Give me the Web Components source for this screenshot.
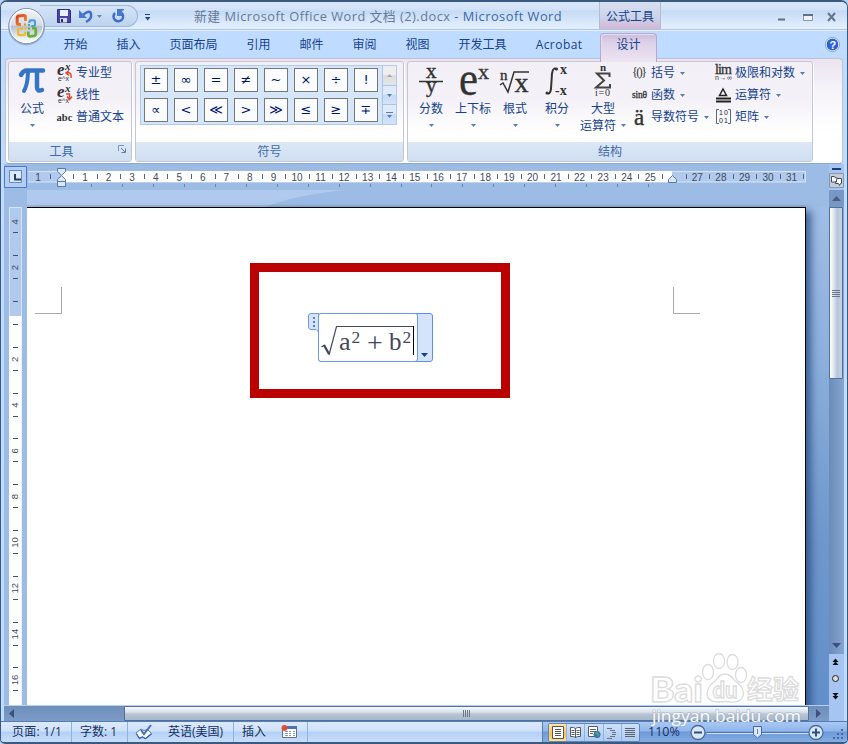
<!DOCTYPE html>
<html lang="zh-CN">
  <head>
    <meta charset="UTF-8" />
    <title>新建 Microsoft Office Word 文档 (2).docx - Microsoft Word</title>
    <style>
      html,
      body {
        margin: 0;
        height: 744px;
        overflow: hidden;
        background: #b9d2f2;
      }
      body {
        font: 12px/16px "Open Sans", "Noto Sans CJK SC", sans-serif;
        color: #15428b;
      }
    </style>
  </head>
  <body>
    <word-window></word-window>

    <template id="word-window">
      <style>
        :host {
          display: flex;
          flex-direction: column;
          position: relative;
          box-sizing: border-box;
          width: 848px;
          height: 744px;
          overflow: hidden;
          border: 1px solid #3b5a82;
          border-top-width: 2px;
          border-bottom-width: 2px;
          border-radius: 7px 7px 5px 5px;
          background: #bfdbff;
        }
        .ribbon {
          display: flex;
          gap: 3px;
          box-sizing: border-box;
          height: 106px;
          margin: 0 4px 0 4px;
          padding: 2px 3px 3px 2px;
          border: 1px solid #c4bfd0;
          border-bottom-color: #8caad0;
          border-radius: 4px;
          background: linear-gradient(#ebe3f0, #f4f1f8 25%, #fff 70%);
          flex: none;
        }
        .col {
          display: flex;
          flex-direction: column;
          gap: 6px;
        }
        office-button {
          position: absolute;
          left: 6px;
          top: 4px;
        }
        baidu-mark {
          position: absolute;
          left: 645px;
          top: 646px;
        }
      </style>
      <title-bar></title-bar>
      <tab-strip></tab-strip>
      <div class="ribbon">
        <ribbon-group label="工具" launcher style="width: 124px">
          <big-button icon="pi" label="公式" style="width: 46px"></big-button>
          <div class="col" style="margin: 3px 0 0 1px">
            <small-button icon="pro" label="专业型"></small-button>
            <small-button icon="linear" label="线性"></small-button>
            <small-button icon="abc" label="普通文本"></small-button>
          </div>
        </ribbon-group>
        <ribbon-group label="符号" style="width: 269px">
          <symbol-gallery></symbol-gallery>
        </ribbon-group>
        <ribbon-group label="结构" style="width: 406px">
          <big-button icon="fraction" label="分数" style="margin-left: 2px"></big-button>
          <big-button icon="script" label="上下标"></big-button>
          <big-button icon="radical" label="根式"></big-button>
          <big-button icon="integral" label="积分"></big-button>
          <big-button icon="sum" label="大型" second="运算符" style="width: 50px"></big-button>
          <div class="col" style="margin: 3px 0 0 3px; width: 84px">
            <small-button icon="bracket" label="括号" arrow></small-button>
            <small-button icon="sin" label="函数" arrow></small-button>
            <small-button icon="accent" label="导数符号" arrow></small-button>
          </div>
          <div class="col" style="margin-top: 3px">
            <small-button icon="lim" label="极限和对数" arrow></small-button>
            <small-button icon="delta" label="运算符" arrow></small-button>
            <small-button icon="matrix" label="矩阵" arrow></small-button>
          </div>
        </ribbon-group>
      </div>
      <work-area></work-area>
      <status-bar></status-bar>
      <office-button></office-button>
      <baidu-mark></baidu-mark>
    </template>

    <template id="office-button">
      <style>
        :host {
          display: block;
        }
        svg {
          display: block;
        }
      </style>
      <svg width="40" height="42" viewBox="0 0 40 42">
        <defs>
          <linearGradient id="orb" x2="0" y2="1">
            <stop offset="0" stop-color="#f4f6fa" />
            <stop offset=".48" stop-color="#d5dbe6" />
            <stop offset=".5" stop-color="#b5c0d2" />
            <stop offset=".8" stop-color="#e4e9f1" />
            <stop offset="1" stop-color="#fff" />
          </linearGradient>
          <linearGradient id="red" x2="1" y2="1">
            <stop offset="0" stop-color="#d9401a" />
            <stop offset="1" stop-color="#f59a2c" />
          </linearGradient>
        </defs>
        <circle cx="19.500" cy="21" r="18.500" fill="#7f92ad" opacity=".55" />
        <circle cx="19.500" cy="20" r="17.600" fill="url(#orb)" stroke="#8192ad" />
        <circle cx="19.500" cy="20" r="16.500" fill="none" stroke="#fff" opacity=".8" />
        <g fill="none">
          <path d="M14 18.500h-2q-1.800 0-1.800-1.800v-5q0-1.500 1.600-1.700l5-.6q1.700 0 1.700 1.600v4" stroke="url(#red)" stroke-width="3" />
          <path d="M22.500 17v-1.500q0-1.200 1.200-1.200h3q1.300 0 1.300 1.300v3.200q0 1.200-1.200 1.200h-2.500" stroke="#4ba0dc" stroke-width="2.200" />
          <path d="M16 22.600h-3.300q-1.500 0-1.500 1.400v3.800q0 1.400 1.500 1.400h3.800q1.500 0 1.500-1.400v-2" stroke="#f2b92e" stroke-width="2.200" />
          <path d="M25 22.200h2.200q1.600 0 1.600 1.600v4q0 1.800-1.600 2l-4.300.5q-1.600 0-1.600-1.700v-3" stroke="#6aaf32" stroke-width="2.800" />
        </g>
        <path d="M17 17.500h2v2h-2z" fill="#f08a24" />
        <path d="M21 18h2v2h-2z" fill="#4ba0dc" />
        <path d="M17.500 21.500h2v2h-2z" fill="#f2b92e" />
        <path d="M21 21.500h2v2h-2z" fill="#6aaf32" />
      </svg>
    </template>

    <template id="title-bar">
      <style>
        :host {
          display: flex;
          flex: none;
          height: 28px;
          position: relative;
          background: linear-gradient(#dae7f8, #d2e2f8 28%, #c5daf4 34%, #d9e9fc 75%, #e5effc);
          border-bottom: 1px solid #a9c7ee;
          box-sizing: border-box;
        }
        .quick {
          display: flex;
          align-items: center;
          box-sizing: border-box;
          width: 98px;
          height: 22px;
          margin: 3px 0 0 39px;
          padding-left: 16px;
          border: 1px solid #9db9dd;
          border-left: 0;
          border-radius: 0 11px 11px 0;
          background: linear-gradient(#d5e4f6, #bdd3ef);
        }
        .more {
          margin: 10px 0 0 5px;
        }
        .title {
          margin: 5px 0 0 42px;
          width: 405px;
          font-size: 12.800px;
          line-height: 18px;
          letter-spacing: 0.500px;
          white-space: pre;
          color: #65799a;
        }
        .title b {
          font-weight: normal;
          color: #3a67a8;
        }
        .context {
          box-sizing: border-box;
          width: 62px;
          height: 27px;
          padding-top: 7px;
          text-align: center;
          border: solid #b4bad2;
          border-width: 0 1px;
          background: linear-gradient(#d8dff0, #cad4ea 55%, #d6b6d3);
        }
        .buttons {
          display: block;
          margin: 7px 0 0 115px;
        }
      </style>
      <div class="quick">
        <svg width="80" height="18" viewBox="0 0 80 18">
          <path d="M1.500 2.500h12l1 1v12h-13z" fill="#4545ac" stroke="#30307f" />
          <path d="M4 3h8v6H4z" fill="#e8f1fb" />
          <path d="M4 11h7v4.500H4z" fill="#d8d8e8" />
          <path d="M5 12h2v3H5z" fill="#2b2b75" />
          <path d="M27 8q7-6 8-1q1 5-5 8" fill="none" stroke="#3f6fcb" stroke-width="2.500" />
          <path d="M23 3v8h8z" fill="#4878d0" />
          <path d="M41 8h5l-2.500 3z" fill="#6387bb" />
          <path d="M59 6a4.800 4.800 0 1 0 6-.5" fill="none" stroke="#3f6fcb" stroke-width="2.500" />
          <path d="M61 2h7v1l-2 1v5h-5z" fill="#4878d0" />
        </svg>
      </div>
      <svg class="more" width="9" height="10" viewBox="0 0 9 10">
        <path d="M2 2.500h5" stroke="#234778" />
        <path d="M2 5h5.500L4.700 8.500z" fill="#234778" />
      </svg>
      <div class="title">新建 Microsoft Office Word 文档 (2).docx<b> - Microsoft Word</b></div>
      <div class="context">公式工具</div>
      <svg class="buttons" width="68" height="16" viewBox="0 0 68 16">
        <path d="M2 10.500h7" stroke="#617087" stroke-width="2" />
        <path d="M27.500 5.500h9v6h-9z" fill="#eef3fa" stroke="#8d98aa" />
        <path d="M27 6h10" stroke="#617087" stroke-width="2" />
        <path d="M52 4l7 8M59 4l-7 8" stroke="#66758b" stroke-width="2" />
      </svg>
    </template>

    <template id="tab-strip">
      <style>
        :host {
          display: flex;
          flex: none;
          height: 28px;
          padding-left: 48px;
          box-sizing: border-box;
          border-top: 1px solid #e4efff;
          background: #bfdbff;
        }
        span {
          padding: 6px 14.500px 0;
          white-space: nowrap;
        }
        .active {
          box-sizing: border-box;
          width: 57px;
          height: 29px;
          margin: 2px 0 -2px;
          padding: 3px 0 0;
          text-align: center;
          border: 1px solid #b7a9cc;
          border-bottom: 0;
          border-radius: 4px 4px 0 0;
          background: linear-gradient(#cbbcdc, #dcd1e8 30%, #eee5f2);
          box-shadow: inset 1px 1px #eadff0;
          position: relative;
        }
        svg {
          margin: 6px 0 0 auto;
          padding-right: 7px;
        }
      </style>
      <span>开始</span><span>插入</span><span>页面布局</span><span>引用</span><span>邮件</span
      ><span>审阅</span><span>视图</span><span>开发工具</span
      ><span style="width: 50px; letter-spacing: 0.45px">Acrobat</span><span class="active">设计</span>
      <svg width="15" height="15" viewBox="0 0 15 15">
        <circle cx="7.500" cy="7.500" r="6.500" fill="#2b62cf" stroke="#fff" stroke-width="1.200" />
        <circle cx="7.500" cy="7.500" r="7" fill="none" stroke="#738db5" stroke-width=".8" />
        <text x="4.600" y="11.500" font-family="Liberation Sans" font-weight="bold" font-size="11" fill="#fff">?</text>
      </svg>
    </template>

    <template id="ribbon-group">
      <style>
        :host {
          display: flex;
          flex-direction: column;
          flex: none;
          box-sizing: border-box;
          height: 101px;
          border: 1px solid #c3c7d1;
          border-radius: 3px;
          background: linear-gradient(#f2eff7, #f4f2f8 40%, #fff 72%);
          box-shadow: 1px 1px #fff;
        }
        .body {
          display: flex;
          height: 80px;
        }
        .label {
          position: relative;
          height: 19px;
          line-height: 19px;
          padding-right: 17px;
          text-align: center;
          color: #3e6aaa;
          background: linear-gradient(#dce7f5, #cfdff1);
        }
        .label.plain {
          padding-right: 0;
        }
        svg {
          position: absolute;
          right: 4px;
          top: 3px;
        }
      </style>
      <div class="body"><slot></slot></div>
      <div class="label">
        <span></span>
        <svg width="9" height="9" viewBox="0 0 9 9">
          <path d="M.5 6V.5H6" fill="none" stroke="#7c95b9" />
          <path d="M3 3l4 4M7.500 3.500v4h-4" fill="none" stroke="#66799b" />
        </svg>
      </div>
    </template>

    <template id="symbol-gallery">
      <style>
        :host {
          display: flex;
          box-sizing: border-box;
          width: 257px;
          height: 60px;
          margin: 3px 0 0 4px;
          border: 1px solid #b1cbe9;
          background: #d5e6f8;
        }
        .cells {
          display: grid;
          grid-template-columns: repeat(8, 24px);
          grid-auto-rows: 24px;
          gap: 6px;
          padding: 2px 4px 2px 3px;
        }
        .cells span {
          box-sizing: border-box;
          border: 1px solid #777;
          background: #fafbfc;
          color: #00106f;
          font: 13px/22px "DejaVu Sans", sans-serif;
          text-align: center;
        }
        .scroll {
          display: flex;
          flex-direction: column;
          width: 15px;
        }
        .scroll i {
          flex: 1;
          display: grid;
          place-items: center;
          border: solid #a9c4e8;
          border-width: 0 0 1px 1px;
          background: linear-gradient(#dfebfa 45%, #c5daf4 50%, #d3e4f8);
        }
        .scroll i:first-child {
          background: linear-gradient(#eee 45%, #ddd 50%, #e5e5e5);
        }
        .scroll i:last-child {
          border-bottom: 0;
        }
      </style>
      <div class="cells"></div>
      <div class="scroll">
        <i><svg width="7" height="5"><path d="M1 4h5L3.500 1z" fill="#aaa" /></svg></i>
        <i><svg width="7" height="5"><path d="M1 1h5L3.500 4z" fill="#567db1" /></svg></i>
        <i><svg width="7" height="8"><path d="M0 1.500h7" stroke="#567db1" /><path d="M1 4h5L3.500 7z" fill="#567db1" /></svg></i>
      </div>
    </template>

    <template id="big-button">
      <style>
        :host {
          display: flex;
          flex-direction: column;
          align-items: center;
          width: 42px;
          white-space: nowrap;
        }
        .icon {
          height: 34px;
          margin-top: 3px;
        }
        .icon svg {
          overflow: visible;
        }
        .text {
          display: block;
          margin-top: 2px;
        }
        .arrow {
          height: 17px;
          display: flex;
          align-items: center;
          gap: 5px;
        }
      </style>
      <div class="icon"></div>
      <span class="text"></span>
      <div class="arrow">
        <span></span><svg width="5" height="3"><path d="M0 0h5L2.500 3z" fill="#567db1" /></svg>
      </div>
    </template>

    <template id="small-button">
      <style>
        :host {
          display: flex;
          align-items: center;
          height: 16px;
          white-space: nowrap;
        }
        .icon {
          width: 20px;
          height: 18px;
        }
        .icon svg {
          overflow: visible;
        }
        .arrow {
          margin-left: 5px;
        }
      </style>
      <div class="icon"></div>
      <span></span>
      <svg class="arrow" width="5" height="3"><path d="M0 0h5L2.500 3z" fill="#567db1" /></svg>
    </template>

    <template id="work-area">
      <style>
        :host {
          display: grid;
          grid-template-columns: 825px 15px;
          grid-template-rows: 541px 16px;
          height: 557px;
          padding-left: 3px;
          flex: none;
        }
        .desk {
          display: grid;
          grid-template-columns: 23px 802px;
          grid-template-rows: 43px 498px;
          overflow: hidden;
          background: linear-gradient(#a0bee6 8%, #8db0dd 35%, #6f97cb 70%, #6390cb);
        }
        .top {
          grid-column: 1 / 3;
          display: flex;
          align-items: flex-start;
          background: #9dbce5;
        }
        .left {
          background: #9dbce5;
          position: relative;
          z-index: 1;
        }
        .right {
          display: flex;
          flex-direction: column;
          background: #a6c5f3;
        }
        .split {
          height: 43px;
        }
        .track {
          height: 447px;
          display: flex;
          flex-direction: column;
          justify-content: space-between;
          background: linear-gradient(90deg, #6b8bb8, #87a5cf);
        }
        .thumb {
          box-sizing: border-box;
          height: 172px;
          margin: 0 1px 0 0;
          display: grid;
          place-items: center;
          border: 1px solid #536f9f;
          border-radius: 1px;
          background: linear-gradient(90deg, #fff, #dfe7ef 30%, #b4c6da 60%, #c6d3e2);
        }
        .bottom {
          grid-column: 1;
          display: flex;
          box-sizing: border-box;
          height: 16px;
          border-top: 1px solid #b6d0f4;
          background: linear-gradient(#6f8fbb, #7c9bc6);
        }
        .bottom .thumb {
          width: 685px;
          height: 15px;
          margin-left: 103px;
          background: linear-gradient(#f6f9fc, #d7e0e9 40%, #b7c4d3 55%, #a8b8c9);
        }
        svg {
          display: block;
        }
      </style>
      <div class="desk">
        <div class="top"><h-ruler></h-ruler></div>
        <div class="left"><v-ruler></v-ruler></div>
        <doc-page></doc-page>
      </div>
      <div class="right">
        <svg class="split" width="15" height="43" viewBox="0 0 15 43">
          <path d="M3 5h9" stroke="#1f3c70" stroke-width="2" />
          <path d="M0 26h15v17H0z" fill="#7797c4" />
          <path d="M.5 9.500h14v14H.5z" fill="#c6ccd6" stroke="#8798b0" />
          <path d="M2.500 12.500h3l1 1.500h2l-1 2v2h-5zM8.500 14.500h4v5h-1l-1 2-1-2h-3v-2" fill="#fff" stroke="#454a66" />
          <path d="M3 37h9L7.500 32z" fill="#4c5b83" />
        </svg>
        <div class="track">
          <div class="thumb">
            <svg width="8" height="9"><path d="M0 1.500h8M0 3.500h8M0 5.500h8M0 7.500h8" stroke="#697789" /></svg>
          </div>
          <svg width="15" height="16"><path d="M3 5h9L7.500 10z" fill="#3f4f80" /></svg>
        </div>
        <svg width="15" height="51" viewBox="0 0 15 51">
          <path d="M3.500 8h6l-3-3.500zM3.500 11h6l-3-3.500z" fill="#111" />
          <circle cx="6.500" cy="24.500" r="3" fill="#ddd" stroke="#222" />
          <path d="M3.500 39h6l-3 3.500zM3.500 42h6l-3 3.500z" fill="#111" />
        </svg>
      </div>
      <div class="bottom">
        <svg width="17" height="14"><path d="M10 3v9L5 7.500z" fill="#3f4f80" /></svg>
        <div class="thumb">
          <svg width="8" height="7"><path d="M.5 0v7M2.500 0v7M4.500 0v7M6.500 0v7" stroke="#697789" /></svg>
        </div>
        <svg width="18" height="14"><path d="M6 3v9l5-4.500z" fill="#3f4f80" /></svg>
      </div>
      <div style="background: #a6c5f3"></div>
    </template>

    <template id="doc-page">
      <style>
        :host {
          display: block;
          position: relative;
          box-sizing: border-box;
          width: 779px;
          height: 500px;
          border: solid #000;
          border-width: 1px 1px 0 0;
          background: #fff;
          box-shadow: 5px 4px 8px 0 #25497dcc;
        }
        .mark {
          position: absolute;
          top: 79px;
          width: 26px;
          height: 26px;
          border: solid #aaa;
          border-width: 0 0 1px 1px;
        }
        .mark.l {
          left: 8px;
          border-width: 0 1px 1px 0;
        }
        .mark.r {
          left: 646px;
        }
        .frame {
          position: absolute;
          left: 223px;
          top: 55px;
          width: 242px;
          height: 117px;
          border: 9px solid #ba0000;
        }
        math-box {
          position: absolute;
          left: 281px;
          top: 105px;
        }
      </style>
      <div class="mark l"></div>
      <div class="mark r"></div>
      <div class="frame"></div>
      <math-box></math-box>
    </template>

    <template id="math-box">
      <style>
        :host {
          display: block;
        }
        svg {
          display: block;
        }
        text {
          font-family: "Liberation Serif", serif;
          fill: #44485c;
        }
      </style>
      <svg width="126" height="50" viewBox="0 0 126 50">
        <path d="M11 .5H3Q.5.500.5 3v11q0 2.500 2.500 2.500h5l3 3" fill="#d6e3fd" stroke="#6a9be0" />
        <path d="M5 4h2v2H5zM5 8h2v2H5zM5 12h2v2H5z" fill="#4a86dc" />
        <rect x="10.500" y=".5" width="114" height="48" rx="2.500" fill="#d6e3fd" stroke="#5b93df" />
        <path d="M13 .5h94q2.500 0 2.500 2.500v43q0 2.500-2.500 2.500H13q-2.500 0-2.500-2.500V3Q10.500.5 13 .5z" fill="#fff" stroke="#6a9be0" />
        <path d="M13.500 34l3-2" fill="none" stroke="#44485c" stroke-width="1.200" />
        <path d="M16 32l5 9" fill="none" stroke="#44485c" stroke-width="2.300" />
        <path d="M21 42L28.500 13.500H105" fill="none" stroke="#44485c" stroke-width="1.200" />
        <text x="31" y="37" font-size="26">a</text>
        <text x="43.500" y="30" font-size="17.500">2</text>
        <text x="59" y="39" font-size="28">+</text>
        <text x="81" y="37" font-size="25">b</text>
        <text x="94.500" y="30" font-size="17.500">2</text>
        <path d="M105.500 13v29" stroke="#000" />
        <path d="M113 40h7l-3.500 4z" fill="#15428b" />
      </svg>
    </template>

    <template id="status-bar">
      <style>
        :host {
          display: flex;
          flex: none;
          align-items: stretch;
          height: 20px;
          border-top: 1px solid #567db1;
          color: #15315f;
          background: linear-gradient(#a9c9f5, #8fb5ea 45%, #6f9ad8 50%, #86ade2);
        }
        .left {
          display: flex;
          box-sizing: border-box;
          width: 542px;
          padding-left: 2px;
          border-right: 1px solid #567db1;
          background: linear-gradient(#dce9fb, #cfe1fa 45%, #b3d0f5 50%, #c9defa);
        }
        .left > * {
          box-sizing: border-box;
          display: flex;
          align-items: center;
          padding-left: 8px;
          white-space: nowrap;
        }
        .sep {
          border-right: 1px solid #8db2e3;
        }
        .views {
          display: flex;
          box-sizing: border-box;
          width: 92px;
          height: 19px;
          margin: 1px 0 0 5px;
          border: 1px solid #6387b9;
          border-radius: 2px;
          background: linear-gradient(#cfe1fa, #adcaf0);
        }
        .views i {
          flex: 1;
          display: grid;
          place-items: center;
          border-right: 1px solid #92b3df;
        }
        .views i:first-child {
          background: linear-gradient(#ffe4a7, #ffc24f 60%, #ffe18c);
        }
        .views i:last-child {
          border: 0;
        }
        .zoom {
          width: 40px;
          padding-left: 8px;
          line-height: 20px;
          font-size: 12.500px;
        }
      </style>
      <div class="left">
        <span class="sep" style="width: 69px; padding-left: 9px; letter-spacing: 0.25px">页面: 1/1</span>
        <span class="sep" style="width: 56px">字数: 1</span>
        <span style="width: 32px; padding-left: 7px">
          <svg width="18" height="16" viewBox="0 0 18 16">
            <path d="M1 9l5-4 3 1.500 3.500-1 4 4-6 5-3-1.500-3.500 1z" fill="#f6f9ff" stroke="#637a9e" />
            <path d="M1.500 10l3 4.500 3-1.500 3 1.800 6-5" fill="none" stroke="#3a62c0" stroke-width="1.300" />
            <path d="M6 6l3 4 7-9" fill="none" stroke="#476eb7" stroke-width="2" />
          </svg>
        </span>
        <span class="sep" style="width: 74px">英语(美国)</span>
        <span style="width: 40px; padding-left: 8px">插入</span>
        <span class="sep" style="width: 34px; padding-left: 7px">
          <svg width="16" height="14" viewBox="0 0 16 14">
            <path d="M1.500 1.500h14v11h-14z" fill="#fff" stroke="#5c7196" />
            <path d="M5 1h11v3H5z" fill="#4c72ae" />
            <path d="M4 6.500h3M8 6.500h2M12 6.500h2M4 8.500h3M8 8.500h2M12 8.500h2M4 10.500h3M8 10.500h2M12 10.500h2" stroke="#8799b5" />
            <circle cx="3.500" cy="3" r="3" fill="#df5037" />
          </svg>
        </span>
      </div>
      <div class="views">
        <i><svg width="12" height="13"><path d="M.5.5h11v12H.5z" fill="#fff" stroke="#565451" /><path d="M3 3.500h6M3 5.500h6M3 7.500h6M3 9.500h6" stroke="#565451" /></svg></i>
        <i><svg width="13" height="13"><path d="M1.500 1.500h3l2 1 2-1h3v9h-3l-2 1-2-1h-3zM6.500 2v10" fill="#fff" stroke="#565b66" /><path d="M2.500 4.500h3M2.500 6.500h3M2.500 8.500h3M7.500 4.500h3M7.500 6.500h3M7.500 8.500h3" stroke="#565b66" /></svg></i>
        <i><svg width="13" height="13"><path d="M.5.5h9v10h-9z" fill="#fff" stroke="#565b66" /><path d="M2 3.500h6M2 5.500h6M2 7.500h3" stroke="#565b66" /><circle cx="9" cy="8.500" r="3.500" fill="#3678a9" /><path d="M7 7l3 0 0 3" stroke="#6fb766" fill="none" /></svg></i>
        <i><svg width="12" height="12"><path d="M1 1.500h5M4 3.500h5M6 5.500h4M6 7.500h4M4 9.500h5M1 11.500h5" stroke="#6a7180" /></svg></i>
        <i><svg width="12" height="12"><path d="M1 1.500h10M1 3.500h10M1 5.500h10M1 7.500h10M1 9.500h10" stroke="#5b616d" /></svg></i>
      </div>
      <span class="zoom">110%</span>
      <svg width="158" height="20" viewBox="0 0 158 20">
        <path d="M19 10.500h102" stroke="#4c70a9" />
        <path d="M19 11.500h102" stroke="#d4e5fb" />
        <g fill="#d9e7fa" stroke="#496a9c" stroke-width="1.300">
          <circle cx="10" cy="10.500" r="7" />
          <circle cx="128" cy="10.500" r="7" />
          <path d="M65.500 4.500h8v8l-4 3.500-4-3.500z" stroke-width="1" />
        </g>
        <path d="M6 10.500h8M124 10.500h8M128 6.500v8" stroke="#32507f" stroke-width="2" />
        <path d="M69.500 7v5" stroke="#6786b5" />
        <path d="M153 7h2v2h-2zM149 11h2v2h-2zM153 11h2v2h-2zM145 15h2v2h-2zM149 15h2v2h-2zM153 15h2v2h-2z" fill="#456ba7" />
      </svg>
    </template>

    <template id="baidu-mark">
      <style>
        :host {
          display: block;
        }
        svg {
          display: block;
        }
      </style>
      <svg width="165" height="82" viewBox="0 0 165 82">
        <g fill="#fff" stroke="#dcdcdc" stroke-width="1.300">
          <ellipse cx="62" cy="24" rx="5.500" ry="7.500" />
          <ellipse cx="73" cy="13" rx="5.500" ry="7.500" />
          <ellipse cx="86.500" cy="14" rx="5.500" ry="7.500" />
          <ellipse cx="95" cy="27" rx="5.500" ry="7.500" />
          <path d="M79 26q5 0 9 6 9 6 9.500 13-.5 10-12.500 9-7-1-13 0-11 0-11-9 1-7 9-13 4-6 9-6z" />
          <g font-family="Lato, sans-serif">
            <text x="4" y="54" font-size="34" font-weight="900" textLength="53" lengthAdjust="spacingAndGlyphs">Bai</text>
            <text x="66.500" y="50" font-size="22" font-weight="bold" textLength="25" lengthAdjust="spacingAndGlyphs">du</text>
            <text x="101" y="51" font-size="26" font-weight="bold" font-family="Noto Sans CJK SC, sans-serif">经验</text>
          </g>
        </g>
        <text x="6" y="74" font-family="Open Sans, sans-serif" font-size="16.500" textLength="149" lengthAdjust="spacingAndGlyphs" fill="#fafcff" stroke="#9eabc0" stroke-opacity=".45" stroke-width="1.800" paint-order="stroke">jingyan.baidu.com</text>
      </svg>
    </template>

    <script>
      const SERIF = `font-family="Liberation Serif, serif" fill="#333"`;
      const ex = `<text x="1" y="11" ${SERIF} font-size="17" font-style="italic" font-weight="bold">e</text>
        <text x="9" y="6" ${SERIF} font-size="11" font-style="italic" font-weight="bold">x</text>
        <text x="2" y="17" font-family="Liberation Sans" font-size="7" textLength="11" fill="#333">e^x</text>`;

      const icons = {
        pi: `<svg width="30" height="34" viewBox="0 0 30 34"><g fill="none" stroke="#3675c5" stroke-linecap="round">
          <path d="M4 10q2-4.500 6-4.500h16" stroke-width="4.500"/><path d="M11 8q-.5 12-4 18" stroke-width="4"/>
          <path d="M20 8v14q0 5 5 3" stroke-width="4.500"/></g></svg>`,
        pro: `<svg width="17" height="18">${ex}<path d="M15 14q1-6-4-5M13 6.500L10 9l3 2.500" fill="none" stroke="#db4a2c" stroke-width="1.500"/></svg>`,
        linear: `<svg width="17" height="18">${ex}<path d="M10 8h3.500v5M11 10.500l2.500 3 2.500-3" fill="none" stroke="#db4a2c" stroke-width="1.500"/></svg>`,
        abc: `<svg width="18" height="18"><text x="0.500" y="13" ${SERIF} font-size="10.500" font-weight="bold" textLength="16">abc</text></svg>`,
        fraction: `<svg width="26" height="34"><g ${SERIF} font-size="21" stroke="#333" stroke-width=".4"><text x="8" y="13">x</text>
          <text x="8" y="27">y</text></g><path d="M1 16.500h24" stroke="#333" stroke-width="1.300"/></svg>`,
        script: `<svg width="32" height="34"><g ${SERIF} stroke="#444" stroke-width=".4">
          <text x="2" y="30" font-size="48" textLength="19" lengthAdjust="spacingAndGlyphs">e</text>
          <text x="21" y="14" font-size="22">x</text></g></svg>`,
        radical: `<svg width="32" height="34"><g ${SERIF} stroke="#333" stroke-width=".4"><text x="1" y="15" font-size="15">n</text>
          <text x="15.500" y="27" font-size="28">x</text></g><path d="M1 20l3-2 5 9 6-20h15" fill="none" stroke="#333" stroke-width="1.500"/></svg>`,
        integral: `<svg width="24" height="34"><path d="M12 4.500q-4-3-5 4L6 24q-1 6-4 4" fill="none" stroke="#333" stroke-width="2"/>
          <circle cx="11.500" cy="4" r="1.500" fill="#333"/><circle cx="2" cy="28" r="1.500" fill="#333"/>
          <g ${SERIF} font-size="14" font-weight="bold"><text x="15" y="9">x</text><text x="10" y="30">-x</text></g></svg>`,
        sum: `<svg width="28" height="34"><g ${SERIF}><text x="11" y="6" font-size="11" font-weight="bold">n</text>
          <text x="6" y="31" font-size="10" textLength="15">i=0</text></g>
          <path d="M20.500 12V8.500H8l7 7-8 7h14V19" fill="none" stroke="#444" stroke-width="2"/></svg>`,
        bracket: `<svg width="18" height="18"><text x="1" y="12" ${SERIF} font-size="12" textLength="15">{()}</text></svg>`,
        sin: `<svg width="18" height="18"><text x="1" y="12" ${SERIF} font-size="9.500" stroke="#333" stroke-width=".3" textLength="15">sinθ</text></svg>`,
        accent: `<svg width="18" height="20"><text x="3" y="17" ${SERIF} font-size="23" stroke="#333" stroke-width=".4">ä</text></svg>`,
        lim: `<svg width="18" height="18"><text x="0" y="10" ${SERIF} font-size="14" stroke="#333" stroke-width=".3" textLength="17">lim</text>
          <text x="0" y="16" font-family="Liberation Sans" font-size="7" textLength="17" fill="#333">n→∞</text></svg>`,
        delta: `<svg width="18" height="18"><path d="M4.500 9.500h7L8 3z" fill="none" stroke="#222" stroke-width="1.500"/>
          <path d="M1 12.500h15M1 15.500h15" stroke="#222" stroke-width="1.800"/></svg>`,
        matrix: `<svg width="18" height="18"><path d="M4 1.500H1.500v14H4M13 1.500h2.500v14H13" fill="none" stroke="#4d698f"/>
          <g font-family="Liberation Sans" font-size="7" fill="#222"><text x="4" y="7" textLength="9">10</text><text x="4" y="15" textLength="9">01</text></g></svg>`,
      };

      // clones the <template> whose id is the tag name
      class Base extends HTMLElement {
        constructor() {
          super();
          this.attachShadow({ mode: "open" });
          const tpl = document.getElementById(this.localName);
          if (tpl) this.shadowRoot.append(tpl.content.cloneNode(true));
        }
        $(sel) {
          return this.shadowRoot.querySelector(sel);
        }
      }

      class RibbonGroup extends Base {
        connectedCallback() {
          this.$(".label span").textContent = this.getAttribute("label");
          if (!this.hasAttribute("launcher")) {
            this.$(".label").classList.add("plain");
            this.$("svg").remove();
          }
        }
      }

      class BigButton extends Base {
        connectedCallback() {
          this.$(".icon").innerHTML = icons[this.getAttribute("icon")];
          this.$(".text").textContent = this.getAttribute("label");
          this.$(".arrow span").textContent = this.getAttribute("second") || "";
          if (!this.hasAttribute("second")) this.$(".arrow span").remove();
        }
      }

      class SmallButton extends Base {
        connectedCallback() {
          this.$(".icon").innerHTML = icons[this.getAttribute("icon")];
          this.$("span").textContent = this.getAttribute("label");
          if (!this.hasAttribute("arrow")) this.$(".arrow").remove();
        }
      }

      class SymbolGallery extends Base {
        connectedCallback() {
          this.$(".cells").innerHTML = [..."±∞=≠~×÷!∝<≪>≫≤≥∓"]
            .map((c) => `<span>${c.replace("<", "&lt;")}</span>`)
            .join("");
        }
      }

      class HRuler extends Base {
        connectedCallback() {
          const zero = 57.5;
          const step = 23.55;
          let s = "";
          for (let n = -1; n <= 31; n++) {
            if (n !== 0 && n !== 26) {
              s += `<text x="${zero + n * step}" y="16.500">${Math.abs(n)}</text>`;
            }
            const x = Math.round(zero + (n + 0.5) * step) + 0.5;
            s += `<path d="M${x} 10v5" stroke="#55627c"/>`;
          }
          for (let i = 0; i < 19; i++) {
            s += `<path d="M${Math.round(87 + i * 30.95) + 0.5} 20v3" stroke="#6e85a8"/>`;
          }
          this.shadowRoot.innerHTML = `
            <style>
              :host { display: block; }
              svg { display: block; }
              text { font: 10px "Liberation Sans", sans-serif; fill: #3f4a62; text-anchor: middle; }
            </style>
            <svg width="825" height="43">
              <path d="M23 26h318q-50 5-80 17H23z" fill="#b0caee"/>
              <path d="M23 41h779v2H23z" fill="#6f8fbd" opacity=".3"/>
              <path d="M24 7.500h777.500v10.500H24" fill="#b0c9ec" stroke="#d5e4f8"/>
              <path d="M58 7h610v11H58z" fill="#fff"/>
              ${s}
              <path d="M.5 2.500h22v21H.5z" fill="#b5cdf0" stroke="#4a78d0"/>
              <path d="M5.500 6.500h12v12h-12z" fill="#dce9f8" stroke="#6289c4"/>
              <path d="M11 10v5.500h6" fill="none" stroke="#234064" stroke-width="2"/>
              <g fill="#dbe7f5" stroke="#587ba9">
                <path d="M53.500 4.500h8v3l-4 4-4-4zM57.500 11.500l4 4v2h-8v-2zM53.500 17.500h8v5h-8z"/>
                <path d="M664.500 18.500v-3l4-4 4 4v3z"/>
              </g>
            </svg>`;
        }
      }

      class VRuler extends Base {
        connectedCallback() {
          const zero = 106.5;
          const step = 22.9;
          let s = "";
          for (let n = -4; n <= 17; n++) {
            const y = zero + n * step;
            if (n % 2 === 0 && n !== 0) {
              s += `<text transform="translate(14 ${y}) rotate(-90)">${Math.abs(n)}</text>`;
            }
            s += `<path d="M9 ${Math.round(y + step / 2) - 0.5}h5" stroke="#44506a"/>`;
          }
          this.shadowRoot.innerHTML = `
            <style>
              :host { display: block; }
              svg { display: block; }
              text { font: 9.500px "Liberation Sans", sans-serif; fill: #3f4a62; text-anchor: middle; }
            </style>
            <svg width="23" height="498">
              <path d="M5.500.5h12v498h-12z" fill="#b0c9ec" stroke="#d5e4f8"/>
              <path d="M5 109h12.500v389H5z" fill="#fff"/>
              ${s}
            </svg>`;
        }
      }

      customElements.define("h-ruler", HRuler);
      customElements.define("v-ruler", VRuler);
      customElements.define("ribbon-group", RibbonGroup);
      customElements.define("big-button", BigButton);
      customElements.define("small-button", SmallButton);
      customElements.define("symbol-gallery", SymbolGallery);
      [
        "office-button",
        "title-bar",
        "tab-strip",
        "math-box",
        "doc-page",
        "work-area",
        "status-bar",
        "baidu-mark",
        "word-window",
      ].forEach((name) => customElements.define(name, class extends Base {}));
    </script>
  </body>
</html>
